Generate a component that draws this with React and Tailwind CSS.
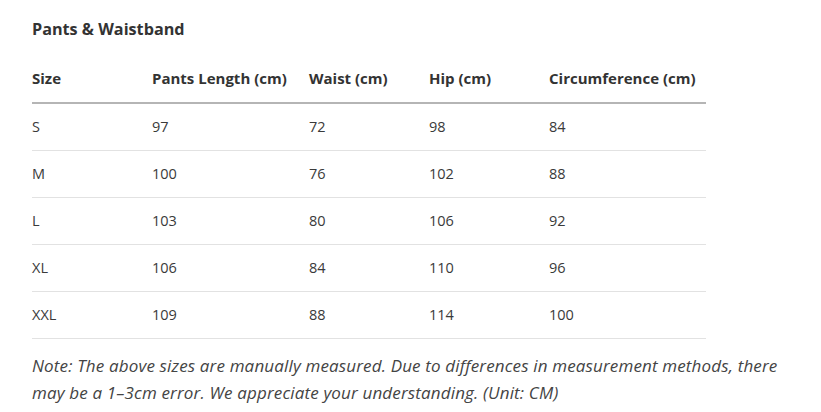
import React from 'react';

const rows = [
    ['S', '97', '72', '98', '84'],
    ['M', '100', '76', '102', '88'],
    ['L', '103', '80', '106', '92'],
    ['XL', '106', '84', '110', '96'],
    ['XXL', '109', '88', '114', '100'],
];

const headers = ['Size', 'Pants Length (cm)', 'Waist (cm)', 'Hip (cm)', 'Circumference (cm)'];
const widths = ['w-[120px]', 'w-[157px]', 'w-[120px]', 'w-[120px]', 'w-[157px]'];

export default function App() {
    return (
        <div className="min-h-screen bg-white pl-8 pr-2 pt-[17px] text-[#3a3a3a]" style={{ fontFamily: '"Open Sans", "Noto Sans", sans-serif' }}>
            <h2 className="text-[16.2px] font-bold leading-6 text-[#333]">Pants &amp; Waistband</h2>

            <table className="mt-[14px] w-[674px] table-fixed border-collapse text-[14.5px]">
                <thead>
                    <tr className="h-[48px] border-b-2 border-[#b5b5b5]">
                        {headers.map((h, i) => (
                            <th key={h} className={`${widths[i]} p-0 text-left text-[15px] font-bold text-[#333] whitespace-nowrap`}>{h}</th>
                        ))}
                    </tr>
                </thead>
                <tbody>
                    {rows.map((r) => (
                        <tr key={r[0]} className="h-[47px] border-b border-[#e2e2e2]">
                            {r.map((c, i) => (
                                <td key={i} className="p-0 text-left font-normal">{c}</td>
                            ))}
                        </tr>
                    ))}
                </tbody>
            </table>

            <p className="mt-[13px] max-w-[770px] text-[17px] italic leading-[27px] tracking-[0.15px] text-[#444]">
                Note: The above sizes are manually measured. Due to differences in measurement methods, there may be a 1–3cm error. We appreciate your understanding. (Unit: CM)
            </p>
        </div>
    );
}
